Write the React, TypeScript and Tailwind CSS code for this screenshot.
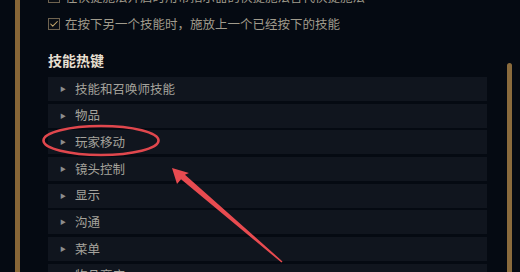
import { Check } from "lucide-react";

const hotkeyGroups = ["技能和召唤师技能", "物品", "玩家移动", "镜头控制", "显示", "沟通", "菜单", "物品商店"];

function CheckLine({ label }: { label: string }) {
  return (
    <div className="flex h-[27px] items-center gap-[5px]">
      <div className="flex h-[12px] w-[12px] items-center justify-center border border-[#6f6350] bg-[#0a0e14]">
        <Check className="h-[10px] w-[10px] text-[#c8aa6e]" strokeWidth={2.5} />
      </div>
      <span className="text-[12.5px] leading-none text-[#a09b8c]">{label}</span>
    </div>
  );
}

export default function App() {
  return (
    <div
      className="relative flex h-[272px] w-[520px] overflow-hidden bg-[#050a12]"
      style={{ fontFamily: '"Noto Sans CJK SC", "Noto Sans", sans-serif' }}
    >
      <div className="ml-[15px] w-[5px] shrink-0 bg-[#876637]" />

      <div className="ml-[28px] flex w-[439px] shrink-0 flex-col">
        <div className="-mt-[16.5px] flex flex-col">
          <CheckLine label="在快捷施法开启时用带指示器的快捷施法替代快捷施法" />
          <CheckLine label="在按下另一个技能时，施放上一个已经按下的技能" />
        </div>

        <div className="mt-[12.5px] flex h-[20px] items-center text-[14px] font-bold text-[#e6dfd0]">技能热键</div>

        <div className="mt-[7px] flex flex-col gap-[2.67px]">
          {hotkeyGroups.map((name) => (
            <div key={name} className="flex h-[24px] shrink-0 items-center bg-[#10151e] pl-[12px]">
              <span className="w-[15px] text-[6px] leading-none text-[#8d8d8d]">▶</span>
              <span className="text-[12.5px] leading-none text-[#a5a39c]">{name}</span>
            </div>
          ))}
        </div>
      </div>

      <div className="ml-[20px] mt-[63px] w-[5px] shrink-0 rounded-t-sm bg-[#8a6b3d]" />

      {/* red annotation: ring + arrow */}
      <svg className="pointer-events-none absolute inset-0" width="520" height="272" viewBox="0 0 520 272">
        <ellipse cx="101" cy="140.5" rx="57.5" ry="14.5" fill="none" stroke="#e0474d" strokeWidth="2.6" />
        <polygon
          fill="#e84b50"
          points="172,168 189,173 184.95,174.72 282.52,261.39 281.48,262.61 181.05,179.28 177,184"
        />
      </svg>
    </div>
  );
}
